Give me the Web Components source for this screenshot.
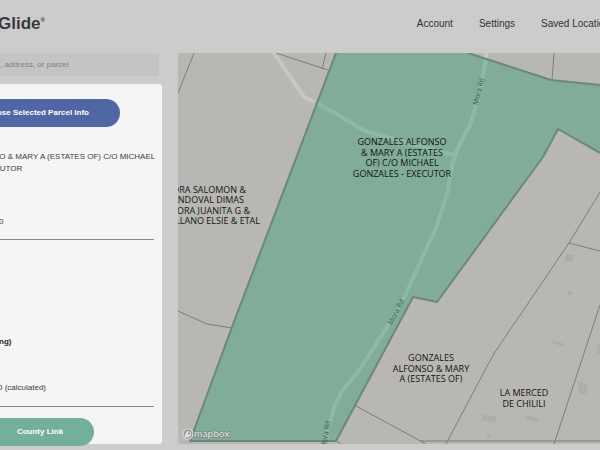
<!DOCTYPE html>
<html lang="en">
<head>
<meta charset="utf-8">
<title>Glide</title>
<style>
html, body { margin: 0; height: 100%; }
body { background: #cccccc; color: #3c3c3c; font-family: "Liberation Sans", Arial, sans-serif; overflow: hidden; }
</style>
</head>
<body>
<glide-app></glide-app>
<script>
const define = (name, html) => customElements.define(name, class extends HTMLElement {
  constructor() {
    super();
    const t = document.createElement('template');
    t.innerHTML = html;
    this.attachShadow({ mode: 'open' }).append(t.content.cloneNode(true));
  }
});

define('glide-header', `
<style>
:host { display: flex; align-items: center; justify-content: space-between; height: 48px; overflow: hidden; }
h1 { margin: 0 0 0 -2px; font-size: 17px; line-height: 20px; color: #3a3a3a; display: flex; }
sup { font-size: 6px; line-height: 12px; }
nav { display: flex; gap: 26px; margin-right: -15px; white-space: nowrap; }
a { color: #333; font-size: 10px; line-height: 14px; text-decoration: none; }
</style>
<h1>Glide<sup>®</sup></h1>
<nav><a href="#account">Account</a><a href="#settings">Settings</a><a href="#locations">Saved Locations</a></nav>`);

define('parcel-search', `
<style>
:host { display: block; margin-right: 3px; }
input { box-sizing: border-box; display: block; width: 100%; height: 23px; border: 0; border-radius: 0 2px 2px 0; background: #c4c4c4; padding: 0; font: 8px/12px "Liberation Sans", Arial, sans-serif; color: #808080; outline: 0; }
input::placeholder { color: #808080; opacity: 1; }
</style>
<input type="text" aria-label="Search by owner, address, or parcel" placeholder=", address, or parcel">`);

define('pill-button', `
<style>
:host { display: block; }
button { display: block; width: 100%; height: 28px; border: 0; border-radius: 14px; background: var(--pill, #5167a3); color: #fff; padding: 0; font: bold 8px/12px "Liberation Sans", Arial, sans-serif; text-align: center; white-space: nowrap; }
</style>
<button type="button"><slot></slot></button>`);

define('parcel-info', `
<style>
:host { display: flex; flex-direction: column; box-sizing: border-box; background: #f5f5f5; border-radius: 0 3px 3px 0; padding: 15px 8px 0 0; font-size: 8px; line-height: 12px; color: #3c3c3c; }
.close { margin: 0 34px 0 -34px; }
.link { margin: 11px 60px 0 -14px; --pill: #73b09b; }
p { margin: 0; white-space: nowrap; }
.owner { margin-top: 24px; margin-left: -6px; }
.id { margin-top: 41px; margin-left: -1px; }
.head { margin: 96px 0 0 -1px; font-weight: bold; color: #222; }
.acres { margin-top: 34px; margin-left: -2px; }
hr { width: 100%; margin: 11px 0 0; border: 0; border-top: 1px solid #888; }
.last { margin-top: 12px; }
</style>
<pill-button class="close">ose Selected Parcel Info</pill-button>
<p class="owner">SO &amp; MARY A (ESTATES OF) C/O MICHAEL<br>CUTOR</p>
<p class="id">0</p>
<hr>
<p class="head">ng)</p>
<p class="acres">0 (calculated)</p>
<hr class="last">
<pill-button class="link">County Link</pill-button>`);

define('parcel-map', `
<style>
:host { display: block; background: #b8b7b3; border-radius: 3px 0 0 3px; overflow: hidden; }
svg { display: block; width: 100%; height: 100%; }
.label { font: 9px "Open Sans", "Noto Sans", sans-serif; fill: #151515; text-anchor: middle; }
.end { text-anchor: end; }
.road { font: 7px "Open Sans", "Noto Sans", sans-serif; fill: #35554a; text-anchor: middle; }
.line { fill: none; stroke: #7d7c7a; stroke-width: 1; }
.way { fill: none; stroke-width: 4; stroke-linejoin: round; }
.logo { font: bold 10px Lato, sans-serif; fill: #d5dad7; stroke: #6c7771; stroke-width: 1; paint-order: stroke; }
</style>
<svg viewBox="178 53 422 391" preserveAspectRatio="xMinYMin slice" role="img" aria-label="Parcel map">
  <path fill="#aeadaa" d="M566 254l8 1-1 7-9-1zM568 291h4v4h-4zM553 340l12 4-1 3-12-4zM578 382l8 1 1 10-6 2-3-6zM483 414l14 3-2 6-14-3zM526 415l13 3-1 4-13-3zM487 434h4v4h-4zM597 345h3v9h-3z"/>
  <path class="way" stroke="#c8c7c4" d="M272 50L304 97L325 107M487 50L485 62"/>
  <path fill="#80ac99" d="M336 53L232 327L190 441H336L413 297L437 302L543 157L558 129L600 153V85L551 80L468 53Z"/>
  <path class="way" stroke="#8dbaa7" d="M315 102L340 116L365 131L378 135L442 152L454 155M486 58L484 70L478 100L470 125L457 150L452 165L448 190L436 228L424 254L404 298L387 327L360 369L342 391L335 405L328 428L326 444"/>
  <path fill="none" stroke="#6c877b" stroke-width="2" stroke-linejoin="round" d="M600 153L558 129L543 157L437 302L413 297L336 441H190L232 327L336 53M600 85L551 80L468 53"/>
  <path class="line" d="M194 53L178 93M276 53L328 70M326 53L322 69M178 311L207 324L232 328M554 53L552 80M600 192L569 243L495 352L485 370L446 444M569 243L600 251M600 305L554 444M356 406L426 444M420 441H600M336 441L341 444"/>
  <text class="label"><tspan x="402" y="145">GONZALES ALFONSO</tspan><tspan x="402" y="156">&amp; MARY A (ESTATES</tspan><tspan x="402" y="166">OF) C/O MICHAEL</tspan><tspan x="402" y="177">GONZALES - EXECUTOR</tspan></text>
  <text class="label end"><tspan x="246" y="193">ORA SALOMON &amp;</tspan><tspan x="244" y="203">ANDOVAL DIMAS</tspan><tspan x="250" y="214">MORA JUANITA G &amp;</tspan><tspan x="260" y="224">ELLANO ELSIE &amp; ETAL</tspan></text>
  <text class="label"><tspan x="431" y="361">GONZALES</tspan><tspan x="431" y="372">ALFONSO &amp; MARY</tspan><tspan x="431" y="382">A (ESTATES OF)</tspan></text>
  <text class="label"><tspan x="524" y="396">LA MERCED</tspan><tspan x="524" y="407">DE CHILILI</tspan></text>
  <text class="road" transform="translate(481 92) rotate(-76)">Mora Rd</text>
  <text class="road" transform="translate(398 313) rotate(-62)">Mora Rd</text>
  <text class="road" transform="translate(328 435) rotate(-80)">Mora Rd</text>
  <circle cx="188" cy="434" r="5" fill="#909590" stroke="#d5d8d5" stroke-width="1.2"/>
  <path fill="#dfe2df" d="M185 437c-1-6 5-7 6-4s-2 5-6 4z"/>
  <circle cx="189" cy="433.5" r="1" fill="#7e8580"/>
  <text class="logo" x="194" y="437">mapbox</text>
</svg>`);

define('glide-app', `
<style>
:host { display: flex; flex-direction: column; box-sizing: border-box; height: 100%; padding-bottom: 6px; }
main { display: grid; grid-template-columns: 27% 1fr; grid-template-rows: minmax(0, 1fr); gap: 16px; flex: 1; min-height: 0; margin-top: 5px; }
aside { display: flex; flex-direction: column; gap: 8px; min-width: 0; min-height: 0; }
parcel-info { flex: 1; min-height: 0; }
</style>
<glide-header></glide-header>
<main>
  <aside><parcel-search></parcel-search><parcel-info></parcel-info></aside>
  <parcel-map></parcel-map>
</main>`);
</script>
</body>
</html>
